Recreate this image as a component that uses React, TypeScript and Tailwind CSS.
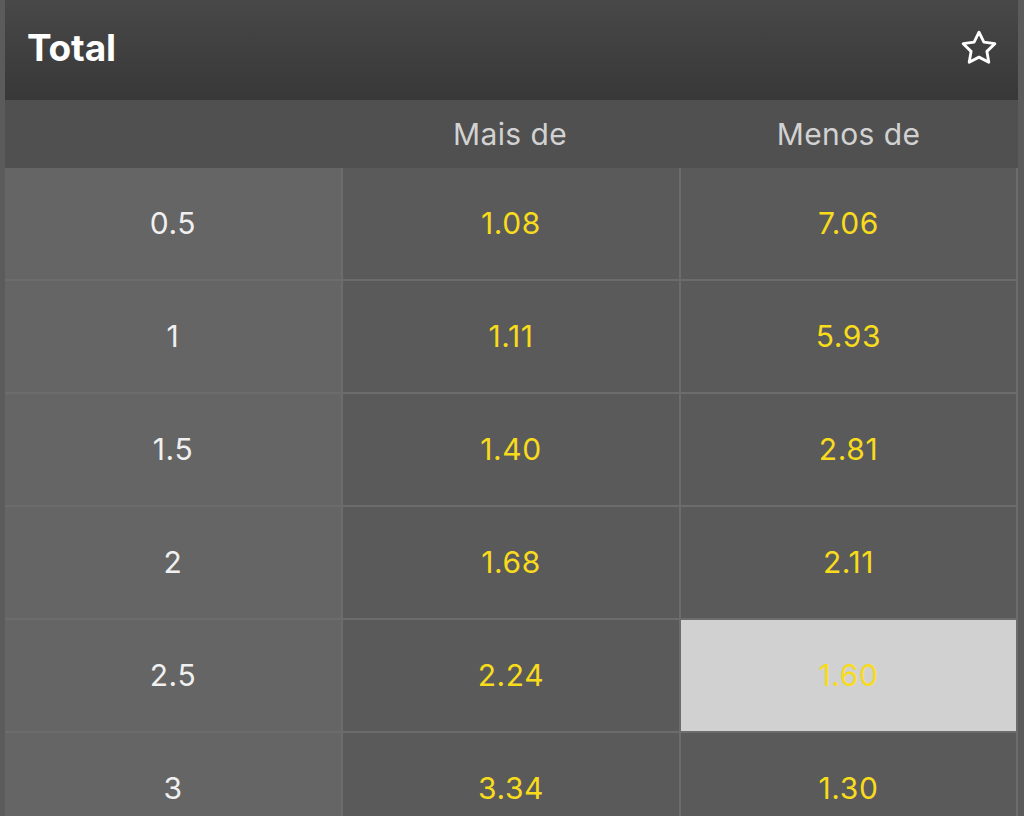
import React from "react";

const rows = [
	{ line: "0.5", over: "1.08", under: "7.06" },
	{ line: "1", over: "1.11", under: "5.93" },
	{ line: "1.5", over: "1.40", under: "2.81" },
	{ line: "2", over: "1.68", under: "2.11" },
	{ line: "2.5", over: "2.24", under: "1.60", selected: true },
	{ line: "3", over: "3.34", under: "1.30" },
];

function StarIcon() {
	return (
		<svg width="38" height="38" viewBox="0 0 24 24" fill="none" stroke="white" strokeWidth="1.8" strokeLinejoin="round">
			<polygon points="12,2 15.09,8.26 22,9.27 17,14.14 18.18,21.02 12,17.77 5.82,21.02 7,14.14 2,9.27 8.91,8.26" />
		</svg>
	);
}

export default function App() {
	return (
		<div
			className="h-[816px] w-[1024px] overflow-hidden bg-[#5b5b5b] pl-[5px] pr-[6px]"
			style={{ fontFamily: "Inter, 'Liberation Sans', sans-serif" }}
		>
			<div className="flex h-[100px] items-center justify-between bg-gradient-to-b from-[#484848] to-[#383838] pb-[4px] pl-[22px] pr-[20px]">
				<span className="text-[37px] font-bold tracking-[-0.2px] text-white">Total</span>
				<StarIcon />
			</div>
			<div className="grid h-[68px] grid-cols-[336px_338px_339px] items-center bg-[#505050] text-[30px] tracking-[0.4px] text-[#d2d2d2]">
				<span />
				<span className="text-center">Mais de</span>
				<span className="text-center">Menos de</span>
			</div>
			<div className="grid grid-cols-[336px_336px_335px] gap-[2px] bg-[#6c6c6c] pr-[2px] text-[30px] tracking-[0.6px]">
				{rows.map((r) => (
					<React.Fragment key={r.line}>
						<div className="flex h-[111px] items-center justify-center bg-[#656565] text-[#f0f0f0]">
							{r.line}
						</div>
						<div className="flex h-[111px] items-center justify-center bg-[#5a5a5a] text-[#f8dc1c]">
							{r.over}
						</div>
						<div
							className={
								r.selected
									? "flex h-[111px] items-center justify-center bg-[#d1d1d1] text-[#f8dc1c]"
									: "flex h-[111px] items-center justify-center bg-[#5a5a5a] text-[#f8dc1c]"
							}
						>
							{r.under}
						</div>
					</React.Fragment>
				))}
			</div>
		</div>
	);
}
